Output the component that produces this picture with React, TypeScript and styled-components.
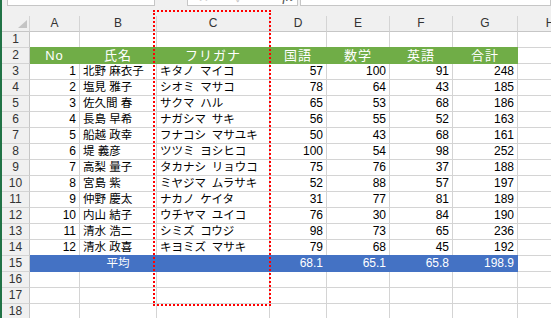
import React from "react";
import styled, {createGlobalStyle} from "styled-components";

type Align = "left" | "center" | "right"

const GREEN = "#70ad47"
const BLUE = "#4472c4"
const LINE = "#d4d4d4"

// 姓と名の間は en space (U+2002)
const rows: [number, string, string, number, number, number, number][] = [
    [1, "北野 麻衣子", "キタノ\u2002マイコ", 57, 100, 91, 248],
    [2, "塩見 雅子", "シオミ\u2002マサコ", 78, 64, 43, 185],
    [3, "佐久間 春", "サクマ\u2002ハル", 65, 53, 68, 186],
    [4, "長島 早希", "ナガシマ\u2002サキ", 56, 55, 52, 163],
    [5, "船越 政幸", "フナコシ\u2002マサユキ", 50, 43, 68, 161],
    [6, "堤 義彦", "ツツミ\u2002ヨシヒコ", 100, 54, 98, 252],
    [7, "高梨 量子", "タカナシ\u2002リョウコ", 75, 76, 37, 188],
    [8, "宮島 紫", "ミヤジマ\u2002ムラサキ", 52, 88, 57, 197],
    [9, "仲野 慶太", "ナカノ\u2002ケイタ", 31, 77, 81, 189],
    [10, "内山 結子", "ウチヤマ\u2002ユイコ", 76, 30, 84, 190],
    [11, "清水 浩二", "シミズ\u2002コウジ", 98, 73, 65, 236],
    [12, "清水 政喜", "キヨミズ\u2002マサキ", 79, 68, 45, 192],
]

const letters = ["A", "B", "C", "D", "E", "F", "G", "H"]
const headers = ["No", "氏名", "フリガナ", "国語", "数学", "英語", "合計"]

export default function App(): JSX.Element {
    const emptyRow = (n: number) => (
        <React.Fragment key={n}>
            <RowHead>{n}</RowHead>
            {letters.map(l => <Cell key={l}/>)}
        </React.Fragment>
    )

    return (
        <Page>
            <GlobalStyle/>
            <GreenEdge/>
            <Main>
                <FormulaBar>
                    <NameBox/>
                    <FxBox>
                        <FxGlyph $dim>✕</FxGlyph>
                        <FxGlyph $dim>✓</FxGlyph>
                        <FxText>fx</FxText>
                    </FxBox>
                    <InputBox/>
                </FormulaBar>
                <Sheet>
                    <Corner>
                        <svg width="9" height="8" viewBox="0 0 9 8">
                            <polygon points="9,0 9,8 0,8" fill="#c4c4c4"/>
                        </svg>
                    </Corner>
                    {letters.map(l => <ColHead key={l}>{l}</ColHead>)}

                    {emptyRow(1)}

                    <RowHead>2</RowHead>
                    {headers.map(h => (
                        <HeadCell key={h} $fill={GREEN} $align="center">{h}</HeadCell>
                    ))}
                    <Cell/>

                    {rows.map((r, i) => (
                        <React.Fragment key={r[0]}>
                            <RowHead>{i + 3}</RowHead>
                            <Cell $align="right" $num>{r[0]}</Cell>
                            <Cell>{r[1]}</Cell>
                            <Cell>{r[2]}</Cell>
                            <Cell $align="right" $num>{r[3]}</Cell>
                            <Cell $align="right" $num>{r[4]}</Cell>
                            <Cell $align="right" $num>{r[5]}</Cell>
                            <Cell $align="right" $num>{r[6]}</Cell>
                            <Cell/>
                        </React.Fragment>
                    ))}

                    <RowHead>15</RowHead>
                    <Cell $fill={BLUE}/>
                    <Cell $fill={BLUE} $align="center">平均</Cell>
                    <Cell $fill={BLUE}/>
                    <Cell $fill={BLUE} $align="right" $num>68.1</Cell>
                    <Cell $fill={BLUE} $align="right" $num>65.1</Cell>
                    <Cell $fill={BLUE} $align="right" $num>65.8</Cell>
                    <Cell $fill={BLUE} $align="right" $num>198.9</Cell>
                    <Cell/>

                    {emptyRow(16)}
                    {emptyRow(17)}
                    {emptyRow(18)}
                </Sheet>
            </Main>
            <CopySelection/>
        </Page>
    )
}

const GlobalStyle = createGlobalStyle`
  html, body {
    margin: 0;
    padding: 0;
    background: #fff;
    overflow: hidden;
  }

  body {
    font-family: "Liberation Sans", "Noto Sans CJK JP", sans-serif;
  }
`
const Page = styled.div`
  position: relative;
  display: flex;
  width: 551px;
  height: 318px;
  overflow: hidden;
  background: #f0f0f0;
`
const GreenEdge = styled.div`
  flex: 0 0 2px;
  background: #217346;
`
const Main = styled.div`
  flex: 1;
  display: flex;
  flex-direction: column;
  min-width: 0;
`
const FormulaBar = styled.div`
  flex: 0 0 6px;
  height: 6px;
  display: flex;
  align-items: flex-end;
  overflow: hidden;
  padding-left: 5px;
`
const Box = styled.div`
  box-sizing: border-box;
  height: 24px;
  flex-shrink: 0;
  background: #fff;
  border: 1px solid #c6c6c6;
`
const NameBox = styled(Box)`
  width: 148px;
`
const FxBox = styled(Box)`
  width: 111px;
  margin-left: 32px;
  display: flex;
  align-items: flex-end;
  padding: 0 4px 1px 10px;
  gap: 26px;
`
const FxGlyph = styled.span<{ $dim?: boolean }>`
  font-size: 13px;
  line-height: 13px;
  color: ${p => p.$dim ? "#c8c8c8" : "#444"};
`
const FxText = styled.span`
  margin-left: auto;
  font-family: "Liberation Serif", serif;
  font-style: italic;
  font-size: 15px;
  line-height: 15px;
  color: #555;
`
const InputBox = styled(Box)`
  flex: 1;
  margin-left: 2px;
`
const Sheet = styled.div`
  margin-top: 10px;
  display: grid;
  grid-template-columns: 28px 50px 77px 113px 57px 63px 63px 65px 65px;
  grid-auto-rows: 16px;
  background: #fff;
`
const Corner = styled.div`
  box-sizing: border-box;
  display: flex;
  justify-content: flex-end;
  align-items: flex-end;
  padding: 0 2px 3px 0;
  background: #f0f0f0;
  border-right: 1px solid ${LINE};
  border-bottom: 1px solid #c6c6c6;
`
const ColHead = styled.div`
  box-sizing: border-box;
  background: #f0f0f0;
  border-right: 1px solid ${LINE};
  border-bottom: 1px solid #c6c6c6;
  text-align: center;
  font-size: 12px;
  line-height: 15px;
  color: #333;
`
const RowHead = styled.div`
  box-sizing: border-box;
  background: #f0f0f0;
  border-right: 1px solid #c6c6c6;
  border-bottom: 1px solid ${LINE};
  text-align: center;
  font-size: 12px;
  line-height: 15px;
  color: #333;
`
const Cell = styled.div<{ $align?: Align; $fill?: string; $num?: boolean }>`
  box-sizing: border-box;
  background: ${p => p.$fill ?? "#fff"};
  border-right: 1px solid ${p => p.$fill ?? LINE};
  border-bottom: 1px solid ${p => p.$fill ?? LINE};
  box-shadow: ${p => p.$fill ? `0 -1px 0 ${p.$fill}` : "none"};
  color: ${p => p.$fill ? "#fff" : "#000"};
  text-align: ${p => p.$align ?? "left"};
  padding: 0 3px;
  font-size: ${p => p.$num ? "12px" : "11.5px"};
  line-height: 15px;
  white-space: nowrap;
  overflow: hidden;
`
const HeadCell = styled(Cell)`
  font-size: 13px;
  letter-spacing: 1px;
`
const CopySelection = styled.div`
  position: absolute;
  left: 153px;
  top: 10px;
  width: 118px;
  height: 296px;
  box-sizing: border-box;
  border: 2px dotted #f00;
  pointer-events: none;
`
